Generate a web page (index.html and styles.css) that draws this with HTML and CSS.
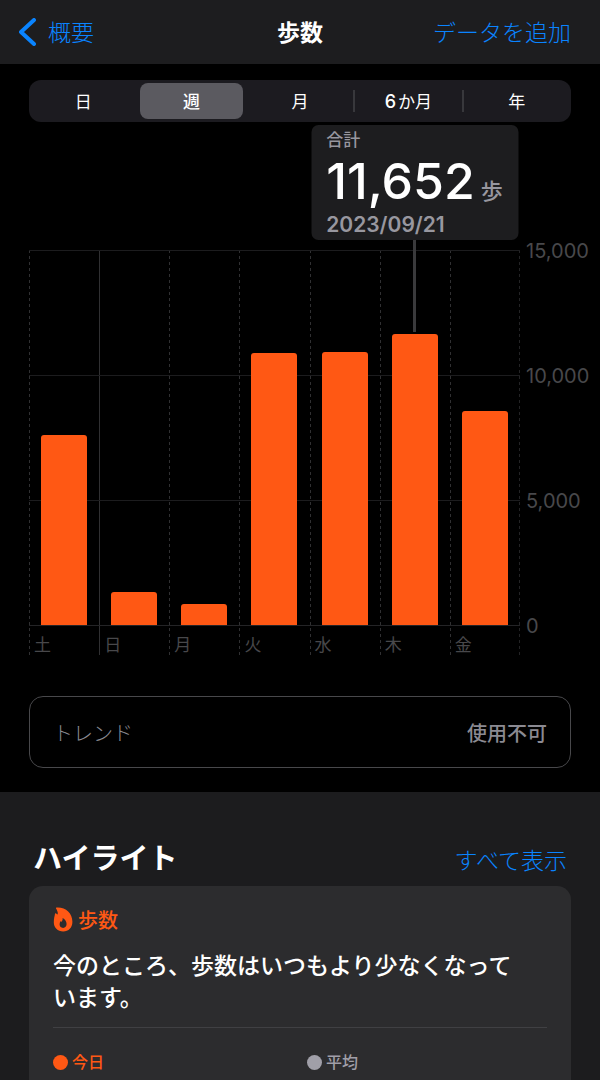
FILE: index.html
```html
<!DOCTYPE html>
<html lang="ja">
<head>
    <meta charset="UTF-8">
    <meta name="viewport" content="width=device-width, initial-scale=1.0">
    <title>歩数</title>
    <link rel="stylesheet" href="styles.css">
</head>
<body>
    <header class="navbar">
        <a class="back" href="#">
            <svg width="17" height="28" viewBox="0 0 17 28" aria-hidden="true">
                <path d="M15 2 L2 14 L15 26" fill="none" stroke="currentColor" stroke-width="4" stroke-linecap="round" stroke-linejoin="round"/>
            </svg>
            概要
        </a>
        <h1>歩数</h1>
        <a class="add" href="#">データを追加</a>
    </header>

    <main>
        <div class="segments">
            <button>日</button>
            <button class="active" aria-pressed="true">週</button>
            <button>月</button>
            <button class="divided"><span class="number">6</span>か月</button>
            <button class="divided">年</button>
        </div>

        <section class="chart">
            <div class="plot">
                <div class="day">
                    <div class="area"><div class="bar" style="height: 50.6%"></div></div>
                    <span>土</span>
                </div>
                <div class="day week-start">
                    <div class="area"><div class="bar" style="height: 8.7%"></div></div>
                    <span>日</span>
                </div>
                <div class="day">
                    <div class="area"><div class="bar" style="height: 5.6%"></div></div>
                    <span>月</span>
                </div>
                <div class="day">
                    <div class="area"><div class="bar" style="height: 72.6%"></div></div>
                    <span>火</span>
                </div>
                <div class="day">
                    <div class="area"><div class="bar" style="height: 72.8%"></div></div>
                    <span>水</span>
                </div>
                <div class="day">
                    <div class="area">
                        <div class="bar selected" style="height: 77.7%">
                            <div class="tooltip">
                                <p class="label">合計</p>
                                <p class="value">11,652<small>歩</small></p>
                                <p class="date">2023/09/21</p>
                            </div>
                        </div>
                    </div>
                    <span>木</span>
                </div>
                <div class="day">
                    <div class="area"><div class="bar" style="height: 57%"></div></div>
                    <span>金</span>
                </div>
            </div>
            <div class="axis">
                <span>15,000</span>
                <span>10,000</span>
                <span>5,000</span>
                <span>0</span>
            </div>
        </section>

        <div class="trend">
            <span>トレンド</span>
            <strong>使用不可</strong>
        </div>
    </main>

    <section class="highlights">
        <div class="heading">
            <h2>ハイライト</h2>
            <a href="#">すべて表示</a>
        </div>
        <article class="card">
            <h3>
                <svg width="20" height="25" viewBox="0 0 20 25" aria-hidden="true">
                    <path fill="currentColor" fill-rule="evenodd" d="M3 1.6 C2.8 0.9 3.2 0.6 4 0.6 C12.6 0.2 19.4 6 19.4 14.8 C19.4 20.8 15.6 24.4 10.2 24.4 C4.6 24.4 0.8 20.6 0.8 15.2 C0.8 11.6 1.6 9.4 2 6.8 C2.2 6 2.8 6 3.2 6.6 L4.2 7.6 C4.9 7.2 4.9 6.2 4.6 5 C4.3 3.6 3.6 2.4 3 1.6 Z M9.6 11 C9.9 12.8 9.2 13.8 8.5 15 C8.2 14.7 8 14.4 7.8 14 C7 15 6.6 16 6.6 17.3 C6.6 19.6 8 20.9 10.1 20.9 C12.2 20.9 13.6 19.5 13.6 17.1 C13.6 14.4 12 12.2 9.6 11 Z"/>
                </svg>
                歩数
            </h3>
            <p class="message">今のところ、歩数はいつもより少なくなって<br>います。</p>
            <div class="legend">
                <span class="today">今日</span>
                <span class="average">平均</span>
            </div>
        </article>
    </section>
</body>
</html>
```

FILE: styles.css
```css
* {
    box-sizing: border-box;
}

body {
    display: flex;
    flex-direction: column;
    min-height: 100vh;
    margin: 0;
    background-color: #000;
    color: #fff;
    font-family: Inter, "Noto Sans CJK JP", sans-serif;
}

h1, h2, h3, p {
    margin: 0;
}

a {
    color: #0a84ff;
    text-decoration: none;
    font-weight: 300;
}

/* Navigation bar */
.navbar {
    display: grid;
    grid-template-columns: 1fr auto 1fr;
    align-items: center;
    height: 64px;
    padding: 0 29px 2px 19px;
    background-color: #1d1d1f;
    font-size: 23px;
}

.navbar h1 {
    padding-left: 10px;
    font-size: 23px;
    font-weight: 700;
}

.back {
    display: flex;
    align-items: center;
    gap: 12px;
}

.back svg {
    margin-top: 2px;
}

.add {
    text-align: right;
}

/* Day / week / month switch */
.segments {
    display: grid;
    grid-template-columns: repeat(5, 1fr);
    height: 42px;
    margin: 16px 29px 0;
    border-radius: 12px;
    background-color: #1c1b20;
}

.segments button {
    position: relative;
    margin: 3px;
    padding: 0 0 2px;
    border: none;
    border-radius: 8px;
    background: none;
    color: #fff;
    font-family: inherit;
    font-size: 17px;
    cursor: pointer;
}

.segments .active {
    background-color: #5b5a60;
    font-weight: 500;
}

.segments .number {
    margin-right: 2px;
    font-size: 18px;
    font-weight: 500;
}

.segments .divided::before {
    content: "";
    position: absolute;
    top: 7px;
    bottom: 7px;
    left: -4px;
    width: 2px;
    background-color: #38383c;
}

/* Bar chart */
.chart {
    display: flex;
    margin-top: 128px;
    padding-left: 29px;
}

.plot {
    display: grid;
    grid-template-columns: repeat(7, 1fr);
    flex: 1;
    background: repeating-linear-gradient(#232325 0 3px, transparent 3px 6px) right / 1px 100% no-repeat;
}

.day {
    background: repeating-linear-gradient(#303032 0 3px, transparent 3px 6px) left / 1px 100% no-repeat;
}

.week-start {
    background: linear-gradient(#303032, #303032) left / 1px 100% no-repeat;
}

.area {
    display: flex;
    align-items: flex-end;
    height: 376px;
    padding-left: 12px;
    border-bottom: 1px solid #242426;
    background: linear-gradient(#1c1c1e 1px, transparent 1px) top / 100% 125px repeat-y;
}

.bar {
    width: 46px;
    border-radius: 3px 3px 0 0;
    background-color: #ff5814;
}

.day span {
    display: block;
    height: 29px;
    padding-left: 5px;
    color: #48484b;
    font-size: 17px;
    line-height: 38px;
}

.axis {
    display: flex;
    flex-direction: column;
    justify-content: space-between;
    width: 80px;
    height: 399px;
    margin-top: -11px;
    padding-left: 6px;
    color: #48484b;
    font-size: 20px;
    line-height: 24px;
}

/* Details of the selected day */
.selected {
    position: relative;
}

.selected::before {
    content: "";
    position: absolute;
    bottom: calc(100% + 2px);
    left: 21px;
    width: 3px;
    height: 92px;
    background-color: #3a3a3c;
}

.tooltip {
    position: absolute;
    bottom: calc(100% + 94px);
    left: 50%;
    width: 207px;
    height: 115px;
    padding: 4px 0 0 15px;
    border-radius: 7px;
    background-color: #1d1d1f;
    color: #98979f;
    white-space: nowrap;
    transform: translateX(-50%);
}

.tooltip .label {
    font-size: 17px;
    font-weight: 500;
    line-height: 22px;
}

.tooltip .value {
    display: flex;
    align-items: baseline;
    gap: 6px;
    height: 61px;
    color: #fff;
    font-size: 50px;
    font-weight: 500;
    line-height: 61px;
}

.tooltip small {
    color: #98979f;
    font-size: 22px;
    font-weight: 500;
    line-height: 24px;
}

.tooltip .date {
    font-size: 21px;
    font-weight: 600;
    line-height: 26px;
}

/* Trend row */
.trend {
    display: flex;
    align-items: center;
    justify-content: space-between;
    height: 72px;
    margin: 41px 29px 24px;
    padding: 0 23px;
    border: 1px solid #48484b;
    border-radius: 14px;
    color: #8b8a92;
    font-size: 20px;
}

.trend span {
    font-weight: 300;
}

.trend strong {
    font-weight: 500;
}

/* Highlights */
.highlights {
    display: flex;
    flex-direction: column;
    flex: 1;
    padding: 46px 29px 0;
    background-color: #1c1c1e;
}

.heading {
    display: flex;
    align-items: baseline;
    justify-content: space-between;
    height: 48px;
    padding: 0 4px;
    line-height: 42px;
}

.heading h2 {
    font-size: 29px;
    font-weight: 700;
}

.heading a {
    font-size: 23px;
}

.card {
    flex: 1;
    padding: 19px 24px 4px;
    border-radius: 14px 14px 0 0;
    background-color: #2c2c2e;
}

.card h3 {
    display: flex;
    align-items: center;
    gap: 5px;
    height: 28px;
    color: #ff5814;
    font-size: 20px;
    font-weight: 500;
}

.message {
    padding: 17px 0 13px;
    border-bottom: 1px solid #404043;
    font-size: 23px;
    font-weight: 500;
    line-height: 32px;
}

.legend {
    display: grid;
    grid-template-columns: 1fr 1fr;
    gap: 14px;
    padding-top: 22px;
    font-size: 16px;
    font-weight: 500;
    line-height: 24px;
}

.legend span {
    display: flex;
    align-items: center;
    gap: 4px;
}

.legend span::before {
    content: "";
    width: 15px;
    height: 15px;
    border-radius: 50%;
    background-color: currentColor;
}

.today {
    color: #ff5814;
}

.average {
    color: #a09fa8;
}
```
